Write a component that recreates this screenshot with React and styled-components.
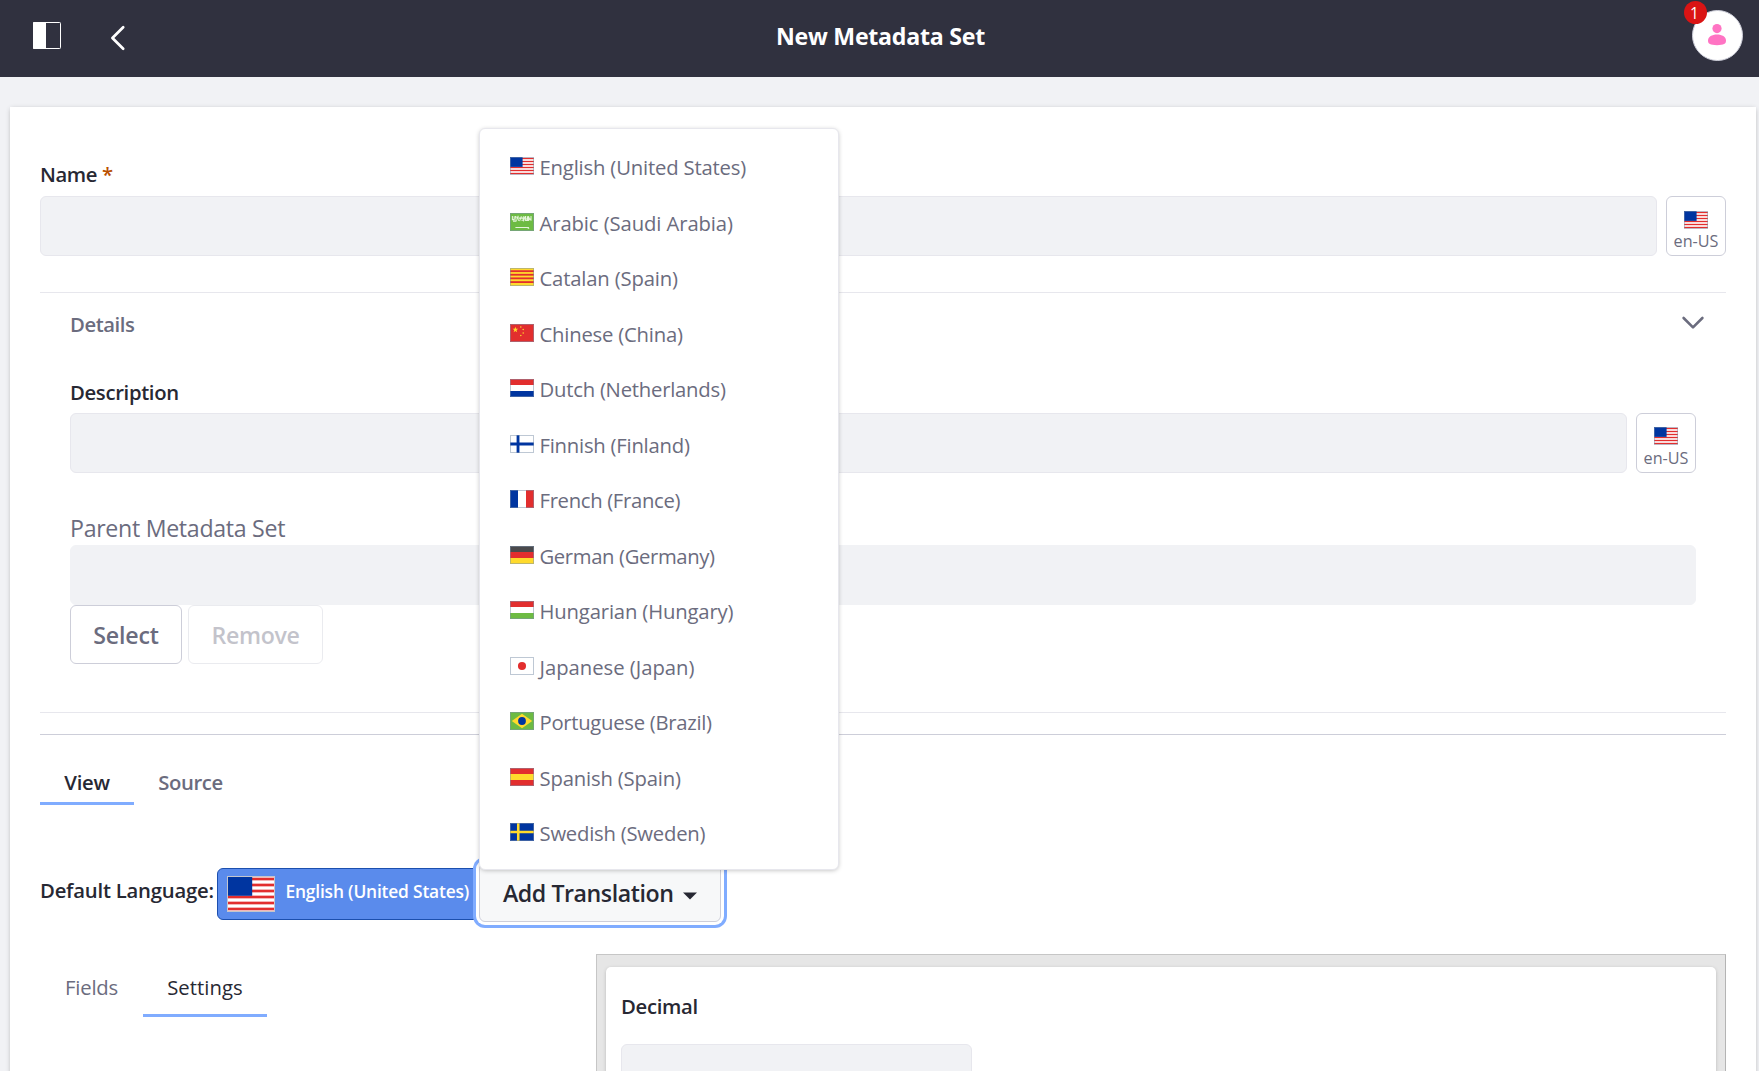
import React from 'react';
import styled, { createGlobalStyle, css } from 'styled-components';

const GlobalStyle = createGlobalStyle`
  *, *::before, *::after { box-sizing: border-box; }
  html, body { margin: 0; padding: 0; overflow: hidden; }
  body {
    background: #f1f2f5;
    color: #272833;
    font-family: "Open Sans", "Noto Sans", sans-serif;
    font-size: 20.27px;
  }
`;

const Page = styled.div`
  width: 100%;
  height: 1071px;
  overflow: hidden;
`;

/* Header */

const Header = styled.header`
  display: grid;
  grid-template-columns: 1fr auto 1fr;
  align-items: center;
  height: 77px;
  padding: 0 16px 5px 33px;
  background: #30313f;
`;

const HeaderNav = styled.div`
  display: flex;
  align-items: center;
  margin-top: -2px;
  svg { display: block; }
`;

const BackButton = styled.span`
  display: flex;
  margin: 5px 0 0 49px;
`;

const Title = styled.h1`
  margin: 0 0 0 -15px;
  color: #fff;
  font-size: 23.16px;
  font-weight: 700;
  line-height: 34px;
  letter-spacing: -0.25px;
`;

const Avatar = styled.div`
  position: relative;
  justify-self: end;
  display: flex;
  align-items: center;
  justify-content: center;
  width: 51px;
  height: 51px;
  margin-top: -2px;
  padding: 0 1px 1px 0;
  border: 1px solid #cdced9;
  border-radius: 50%;
  background: #fff;
`;

const Badge = styled.span`
  position: absolute;
  top: -10px;
  left: -9px;
  width: 23px;
  height: 23px;
  padding-right: 2px;
  border-radius: 50%;
  background: #da1414;
  color: #fff;
  font-size: 15.5px;
  line-height: 24px;
  text-align: center;
`;

/* Sheet and form */

const Sheet = styled.main`
  height: 1100px;
  margin: 30px 3px 0 10px;
  padding: 52px 30px 0;
  background: #fff;
  box-shadow: 0 1px 5px -1px rgba(0, 0, 0, 0.3);
`;

const Label = styled.label`
  display: block;
  font-weight: 600;
  line-height: 30px;
  letter-spacing: ${(p) => p.$ls || 0}px;
`;

const Required = styled.span`
  margin-left: 5px;
  color: #b95000;
`;

const FieldRow = styled.div`
  display: flex;
  gap: 9px;
  margin-top: ${(p) => p.$gap || 6}px;
`;

const Input = styled.div`
  flex: 1;
  height: 60px;
  border: 1px solid ${(p) => (p.$plain ? '#f1f2f5' : '#e7e7ed')};
  border-radius: 6px;
  background: #f1f2f5;
`;

const LocaleButton = styled.button`
  display: flex;
  flex-direction: column;
  align-items: center;
  width: 60px;
  height: 60px;
  padding: ${(p) => (p.$raised ? 13 : 14)}px 0 0;
  border: 1px solid #cdced9;
  border-radius: 6px;
  background: #fff;
  color: #6b6c7e;
  font-family: inherit;
  font-size: 16.2px;
  line-height: 22px;
  svg { margin-bottom: ${(p) => (p.$raised ? 2 : 1)}px; }
`;

const Details = styled.section`
  margin-top: 36px;
  padding: 0 30px 48px;
  border-top: 1px solid #e7e7ed;
  border-bottom: 1px solid #e7e7ed;
`;

const DetailsHeader = styled.div`
  display: flex;
  align-items: center;
  justify-content: space-between;
  height: 62px;
  margin: 0 -9px 22px 0;
  color: #6b6c7e;
  svg { margin-top: -3px; }
`;

const ParentLabel = styled.div`
  margin-top: 38px;
  color: #6b6c7e;
  font-size: 23.16px;
  line-height: 34px;
  letter-spacing: -0.3px;
`;

const ParentBox = styled.div`
  display: flex;
`;

const ButtonGroup = styled.div`
  display: flex;
  gap: 6px;
`;

const Button = styled.button`
  width: ${(p) => p.$w}px;
  height: 59px;
  padding: 2px 0 0;
  border: 1px solid #cdced9;
  border-radius: 6px;
  background: #fff;
  color: #6b6c7e;
  font-family: inherit;
  font-size: 23.16px;
  font-weight: 600;
  letter-spacing: ${(p) => p.$ls}px;
  line-height: 55px;
  opacity: ${(p) => (p.$off ? 0.4 : 1)};
`;

/* Tabs */

const Divider = styled.hr`
  margin: 21px 0 27px;
  border: 0;
  border-top: 1px solid #cdced9;
`;

const Tabs = styled.nav`
  display: flex;
`;

const Tab = styled.div`
  width: ${(p) => p.$w}px;
  text-align: center;
  border-bottom: 3px solid ${(p) => (p.$active ? '#80acff' : 'transparent')};
  color: ${(p) => (p.$active ? '#272833' : '#6b6c7e')};
  letter-spacing: ${(p) => p.$ls || 0}px;
  ${(p) =>
    p.$light
      ? css`
          line-height: 54px;
        `
      : css`
          font-weight: 600;
          line-height: 40px;
        `}
`;

/* Languages */

const LanguageBar = styled.div`
  display: flex;
  align-items: center;
  height: 59px;
  margin-top: 58px;
`;

const LanguageLabel = styled.div`
  flex: 0 0 177px;
  margin-top: -5px;
  font-weight: 600;
  letter-spacing: -0.21px;
  line-height: 30px;
`;

const CurrentLanguage = styled.div`
  display: flex;
  align-items: center;
  width: 262px;
  height: 52px;
  margin-top: 3px;
  padding-left: 9px;
  border: 1px solid #1c4fae;
  border-radius: 6px;
  background: #5a8bec;
  color: #fff;
  font-size: 17.37px;
  font-weight: 600;
  letter-spacing: -0.18px;
  line-height: 26px;
  white-space: nowrap;
`;

const CurrentName = styled.span`
  margin: -6px 0 0 10.5px;
`;

const Dropdown = styled.div`
  position: relative;
`;

const AddButton = styled.button`
  display: flex;
  align-items: center;
  width: 242px;
  height: 59px;
  padding: 0 0 0 23px;
  border: 1px solid #cdced9;
  border-radius: 6px;
  background: #f7f8f9;
  box-shadow: 0 0 0 3px #fff, 0 0 0 6px #80acff;
  color: #272833;
  font-family: inherit;
  font-size: 23.16px;
  font-weight: 600;
  letter-spacing: -0.44px;
  svg { margin: 7px 0 0 9.5px; }
`;

const Menu = styled.ul`
  position: absolute;
  z-index: 2;
  left: 0;
  bottom: calc(100% - 7px);
  width: 360px;
  height: 742px;
  margin: 0;
  padding: 9px 0;
  border: 1px solid #e7e7ed;
  border-radius: 6px;
  background: #fff;
  box-shadow: 0 1px 5px -1px rgba(0, 0, 0, 0.3);
  list-style: none;
`;

const MenuItem = styled.li`
  display: flex;
  align-items: center;
  height: 55.5px;
  padding-left: 30px;
  color: #6b6c7e;
  letter-spacing: ${(p) => p.$ls}px;
  white-space: nowrap;
  svg { margin-top: 0.5px; }
`;

const ItemName = styled.span`
  margin: 3px 0 0 5.5px;
  line-height: 30px;
`;

/* Builder */

const Builder = styled.div`
  display: flex;
  margin-top: 32px;
`;

const Side = styled.div`
  flex: 0 0 556px;
  padding: 6px 0 0;
`;

const Canvas = styled.div`
  flex: 1;
  height: 260px;
  padding: 12px 9px 0;
  border: 1px solid #c6c6c6;
  border-right-color: #b4b4b4;
  background: #e6e6e6;
`;

const Card = styled.div`
  height: 240px;
  padding: 24px 15px;
  border-radius: 5px;
  background: #fff;
  box-shadow: 0 1px 4px -1px rgba(0, 0, 0, 0.3);
`;

const CardField = styled.div`
  display: flex;
  width: 351px;
  margin-top: 23px;
`;

/* Flags, drawn on a 16 x 12 grid */

const RED = '#e22e2e';
const BLUE = '#0035a0';
const YELLOW = '#ffda2c';
const GREEN = '#6dbb43';

const FlagSvg = styled.svg`
  display: block;
  flex: none;
`;

const Bands = ({ colors }) =>
  colors.map((c, i) => (
    <rect key={i} x="0" y={(12 / colors.length) * i} width="16" height={12 / colors.length} fill={c} />
  ));

const star = (cx, cy, r) =>
  Array.from({ length: 10 }, (_, i) => {
    const a = (Math.PI / 5) * i - Math.PI / 2;
    const k = i % 2 ? r * 0.4 : r;
    return `${cx + k * Math.cos(a)},${cy + k * Math.sin(a)}`;
  }).join(' ');

const designs = {
  us: (
    <>
      <rect width="16" height="12" fill="#fff" />
      {[0, 1, 2, 3, 4, 5].map((i) => (
        <rect key={i} x="0" y={i * 2 + 0.55} width="16" height="0.9" fill={RED} />
      ))}
      <rect width="8.4" height="6.6" fill={BLUE} />
    </>
  ),
  sa: (
    <>
      <rect width="16" height="12" fill={GREEN} />
      <path
        d="M1.6 2v2.4h1.2V2.2M3.6 2l.6 3.4M4.4 2.4l1.4 2.8M5.4 1.9v2.3M6.4 5.4l1.2-3.2M7.6 4.8h1.3V2.2M9 5.6l1-3.4M10.4 2v3h1.2V2.2M12.3 5.4V2.2l1 2.6M14 2v3.2M2 5.4h2.4M6 3.4h3M10 4h4"
        fill="none"
        stroke="#e6f5dc"
        strokeWidth="0.7"
      />
      <path d="M3.6 9.7h9M11.8 10.2h1" stroke="#e6f5dc" strokeWidth="0.7" fill="none" />
    </>
  ),
  ct: (
    <>
      <rect width="16" height="12" fill={YELLOW} />
      {[1.5, 3.9, 6.3, 8.8].map((y) => (
        <rect key={y} y={y} width="16" height="1.2" fill={RED} />
      ))}
    </>
  ),
  cn: (
    <>
      <rect width="16" height="12" fill={RED} />
      <polygon points={star(3.6, 3.8, 2)} fill={YELLOW} />
      <circle cx="7.2" cy="2" r="0.5" fill={YELLOW} />
      <circle cx="8.8" cy="3.7" r="0.5" fill={YELLOW} />
      <circle cx="8.8" cy="6" r="0.5" fill={YELLOW} />
      <circle cx="7.2" cy="7.6" r="0.5" fill={YELLOW} />
    </>
  ),
  nl: <Bands colors={[RED, '#fff', BLUE]} />,
  fi: (
    <>
      <rect width="16" height="12" fill="#fff" />
      <path d="M5.35 0v12M0 6h16" stroke={BLUE} strokeWidth="1.9" />
    </>
  ),
  fr: (
    <>
      <rect width="16" height="12" fill="#fff" />
      <rect width="5.33" height="12" fill={BLUE} />
      <rect x="10.67" width="5.33" height="12" fill={RED} />
    </>
  ),
  de: <Bands colors={['#4a4a4c', RED, YELLOW]} />,
  hu: <Bands colors={[RED, '#fff', GREEN]} />,
  jp: (
    <>
      <rect width="16" height="12" fill="#fff" />
      <circle cx="8" cy="6" r="2.7" fill={RED} />
    </>
  ),
  br: (
    <>
      <rect width="16" height="12" fill={GREEN} />
      <path d="M8 1.1L14.8 6 8 10.9 1.2 6z" fill={YELLOW} />
      <circle cx="8" cy="6" r="2.6" fill={BLUE} />
    </>
  ),
  es: (
    <>
      <rect width="16" height="12" fill={RED} />
      <rect y="4" width="16" height="4" fill={YELLOW} />
    </>
  ),
  se: (
    <>
      <rect width="16" height="12" fill={BLUE} />
      <path d="M5.5 0v12M0 6h16" stroke={YELLOW} strokeWidth="1.7" />
    </>
  ),
};

const Flag = ({ code, width = 24, edge = 'rgba(125, 145, 170, 0.5)' }) => {
  const line = 16 / width;
  return (
    <FlagSvg width={width} height={width * 0.75} viewBox="0 0 16 12">
      {designs[code]}
      <rect
        x={line / 2}
        y={line / 2}
        width={16 - line}
        height={12 - line}
        fill="none"
        stroke={edge}
        strokeWidth={line}
      />
    </FlagSvg>
  );
};

const languages = [
  ['us', 'English (United States)', -0.18],
  ['sa', 'Arabic (Saudi Arabia)', -0.1],
  ['ct', 'Catalan (Spain)', -0.17],
  ['cn', 'Chinese (China)', -0.21],
  ['nl', 'Dutch (Netherlands)', -0.23],
  ['fi', 'Finnish (Finland)', -0.23],
  ['fr', 'French (France)', -0.32],
  ['de', 'German (Germany)', -0.37],
  ['hu', 'Hungarian (Hungary)', -0.16],
  ['jp', 'Japanese (Japan)', -0.02],
  ['br', 'Portuguese (Brazil)', -0.29],
  ['es', 'Spanish (Spain)', -0.18],
  ['se', 'Swedish (Sweden)', -0.23],
];

const Locale = ({ raised }) => (
  <LocaleButton $raised={raised}>
    <Flag code="us" />
    en-US
  </LocaleButton>
);

export default function App() {
  return (
    <Page>
      <GlobalStyle />
      <Header>
        <HeaderNav>
          <svg width="28" height="27" viewBox="0 0 28 27">
            <rect x="0.5" y="0.5" width="27" height="26" rx="0.8" fill="none" stroke="#fff" />
            <rect width="13" height="27" rx="0.8" fill="#fff" />
          </svg>
          <BackButton>
            <svg width="16" height="26" viewBox="0 0 16 26">
              <path
                d="M13.2 2.2L2.4 13l10.8 10.8"
                fill="none"
                stroke="#fff"
                strokeWidth="2.7"
                strokeLinecap="round"
                strokeLinejoin="round"
              />
            </svg>
          </BackButton>
        </HeaderNav>
        <Title>New Metadata Set</Title>
        <Avatar>
          <svg width="20" height="23" viewBox="0 0 20 23">
            <circle cx="10" cy="5.6" r="4.6" fill="#ff73c3" />
            <path d="M1 17.6C1 13.8 5 11.6 10 11.6s9 2.2 9 6c0 3.4-2.2 4.6-9 4.6s-9-1.2-9-4.6z" fill="#ff73c3" />
          </svg>
          <Badge>1</Badge>
        </Avatar>
      </Header>
      <Sheet>
        <Label $ls={-0.42}>
          Name<Required>*</Required>
        </Label>
        <FieldRow $gap={7}>
          <Input />
          <Locale />
        </FieldRow>
        <Details>
          <DetailsHeader>
            <Label as="span" $ls={-0.43}>Details</Label>
            <svg width="24" height="16" viewBox="0 0 24 16">
              <path
                d="M2.6 3L12 12.4 21.4 3"
                fill="none"
                stroke="#6b6c7e"
                strokeWidth="2.6"
                strokeLinecap="round"
                strokeLinejoin="round"
              />
            </svg>
          </DetailsHeader>
          <Label $ls={-0.33}>Description</Label>
          <FieldRow>
            <Input />
            <Locale raised />
          </FieldRow>
          <ParentLabel>Parent Metadata Set</ParentLabel>
          <ParentBox>
            <Input $plain />
          </ParentBox>
          <ButtonGroup>
            <Button $w={112} $ls={-0.17}>Select</Button>
            <Button $w={135} $ls={-0.35} $off>Remove</Button>
          </ButtonGroup>
        </Details>
        <Divider />
        <Tabs>
          <Tab $w={94} $active $ls={-0.3}>View</Tab>
          <Tab $w={113} $ls={-0.38}>Source</Tab>
        </Tabs>
        <LanguageBar>
          <LanguageLabel>Default Language:</LanguageLabel>
          <CurrentLanguage>
            <Flag code="us" width={48} edge="#c5c6cc" />
            <CurrentName>English (United States)</CurrentName>
          </CurrentLanguage>
          <Dropdown>
            <AddButton>
              Add Translation
              <svg width="14" height="8" viewBox="0 0 14 8">
                <path d="M0 0.6h14L7 7.6z" fill="#272833" />
              </svg>
            </AddButton>
            <Menu>
              {languages.map(([code, name, ls]) => (
                <MenuItem key={code} $ls={ls}>
                  <Flag code={code} />
                  <ItemName>{name}</ItemName>
                </MenuItem>
              ))}
            </Menu>
          </Dropdown>
        </LanguageBar>
        <Builder>
          <Side>
            <Tabs>
              <Tab $w={103} $light $ls={-0.2}>Fields</Tab>
              <Tab $w={124} $light $active $ls={0.07}>Settings</Tab>
            </Tabs>
          </Side>
          <Canvas>
            <Card>
              <Label $ls={-0.32}>Decimal</Label>
              <CardField>
                <Input />
              </CardField>
            </Card>
          </Canvas>
        </Builder>
      </Sheet>
    </Page>
  );
}
